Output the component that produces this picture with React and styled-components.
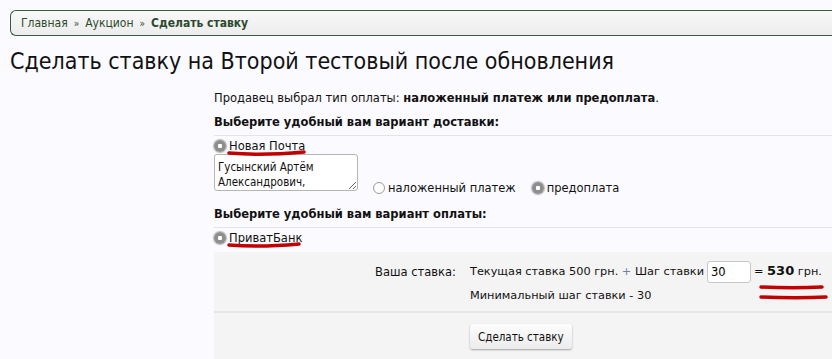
import React from 'react';
import styled, { createGlobalStyle } from 'styled-components';

const GlobalStyle = createGlobalStyle`
  body {
    margin: 0;
    background: #fbfaff;
    font-family: "DejaVu Sans", Verdana, sans-serif;
    font-size: 11.5px;
    color: #111;
  }
`;

const condensed = `"DejaVu Sans Condensed", "DejaVu Sans", Tahoma, sans-serif`;

const Page = styled.div`
  width: 832px;
  height: 359px;
  overflow: hidden;
`;

const Breadcrumbs = styled.div`
  margin: 10px 0 0 10px;
  height: 24px;
  border: 1px solid #3b5a3e;
  border-right: none;
  border-radius: 6px 0 0 6px;
  background: linear-gradient(#f8f8f8, #ececec);
  padding-left: 10px;
  display: flex;
  align-items: center;
  gap: 6px;
  color: #2b4a2d;
  font-family: ${condensed};
  font-size: 12px;
`;

const Crumb = styled.span`
  font-weight: ${p => (p.$current ? 'bold' : 'normal')};
`;

const Sep = styled.span`
  font-size: 10px;
`;

const Title = styled.h1`
  margin: 10px 0 0 10px;
  font-family: ${condensed};
  font-size: 23px;
  font-weight: normal;
  color: #111;
  line-height: 30px;
`;

const Content = styled.div`
  margin: 14px 0 0 214px;
`;

const Line = styled.p`
  margin: 0;
  line-height: 16px;
`;

const Heading = styled.div`
  margin-top: ${p => p.$top || 0}px;
  font-weight: bold;
  padding-bottom: 5px;
  border-bottom: 1px solid #e4e4e8;
  line-height: 16px;
`;

const Option = styled.label`
  position: relative;
  display: inline-flex;
  align-items: center;
  gap: 3px;
  line-height: 14px;
  white-space: nowrap;
`;

const Radio = styled.span`
  width: 12px;
  height: 12px;
  border-radius: 50%;
  box-sizing: border-box;
  flex: none;
  ${p =>
    p.$checked
      ? `
    background: radial-gradient(circle, #fff 0 2px, #8e8e8e 2.5px);
    box-shadow: 0 0 1px 1px #b8b8b8;
  `
      : `
    background: #fff;
    border: 1px solid #9a9a9a;
  `}
`;

const Scribble = styled.svg`
  position: absolute;
  pointer-events: none;
`;

const DeliveryBlock = styled.div`
  margin-top: 3px;
`;

const DeliveryRow = styled.div`
  display: flex;
  align-items: flex-end;
  gap: 15px;
`;

const Address = styled.textarea`
  display: block;
  width: 144px;
  height: 37px;
  box-sizing: border-box;
  margin: -1px 0 0;
  padding: 5px 3px 0;
  border: 1px solid #b5b5b5;
  border-radius: 3px;
  font-family: ${condensed};
  font-size: 11.5px;
  line-height: 15px;
  color: #111;
  resize: both;
  overflow: hidden;
  background: #fff;
`;

const PayTypes = styled.div`
  display: flex;
  gap: 16px;
  margin-bottom: -4px;
`;

const PaymentBlock = styled.div`
  margin-top: 3px;
`;

const BidPanel = styled.div`
  margin-top: 5px;
  background: #f4f4f4;
`;

const BidGrid = styled.div`
  display: grid;
  grid-template-columns: 242px 1fr;
  column-gap: 14px;
  row-gap: 2px;
  padding: 8px 0 4px;
  border-bottom: 2px solid #e6e6e6;
  align-items: center;
  white-space: nowrap;
`;

const Label = styled.div`
  text-align: right;
  line-height: 22px;
`;

const Value = styled.div`
  line-height: 22px;
  font-size: 11.3px;
`;

const Plus = styled.span`
  color: #6f7fa0;
`;

const StepInput = styled.input`
  width: 44px;
  height: 22px;
  box-sizing: border-box;
  margin: 0 3px;
  vertical-align: middle;
  border: 1px solid #c8c8c8;
  border-radius: 3px;
  padding: 0 3px;
  font-family: "DejaVu Sans", Verdana, sans-serif;
  font-size: 11.5px;
  background: #fff;
`;

const Sum = styled.span`
  position: relative;
`;

const Total = styled.b`
  font-size: 13px;
`;

const Actions = styled.div`
  padding: 11px 0 20px 256px;
`;

const Button = styled.button`
  height: 25px;
  padding: 0 8px;
  border: none;
  border-radius: 3px;
  background: linear-gradient(#fdfdfd, #ececec);
  box-shadow: 0 1px 2px rgba(0, 0, 0, 0.35);
  font-family: ${condensed};
  font-size: 11.5px;
  color: #111;
`;

const RedLine = ({ style, w, h = 8, d }) => (
  <Scribble style={style} width={w} height={h} viewBox={`0 0 ${w} ${h}`}>
    <path d={d} fill="none" stroke="#c20000" strokeWidth="3.5" strokeLinecap="round" />
  </Scribble>
);

export default function App() {
  return (
    <Page>
      <GlobalStyle />
      <Breadcrumbs>
        <Crumb>Главная</Crumb>
        <Sep>»</Sep>
        <Crumb>Аукцион</Crumb>
        <Sep>»</Sep>
        <Crumb $current>Сделать ставку</Crumb>
      </Breadcrumbs>
      <Title>Сделать ставку на Второй тестовый после обновления</Title>
      <Content>
        <Line>
          Продавец выбрал тип оплаты: <b>наложенный платеж или предоплата</b>.
        </Line>
        <Heading $top={8}>Выберите удобный вам вариант доставки:</Heading>
        <DeliveryBlock>
          <Option>
            <Radio $checked />
            Новая Почта
            <RedLine
              style={{ left: 13, top: 10 }}
              w={80}
              d="M2 4 C 25 6, 55 5, 77 3"
            />
          </Option>
          <DeliveryRow>
            <Address defaultValue={'Гусынский Артём\nАлександрович,\nг. Киев'} />
            <PayTypes>
              <Option>
                <Radio />
                наложенный платеж
              </Option>
              <Option>
                <Radio $checked />
                предоплата
              </Option>
            </PayTypes>
          </DeliveryRow>
        </DeliveryBlock>
        <Heading $top={15}>Выберите удобный вам вариант оплаты:</Heading>
        <PaymentBlock>
          <Option>
            <Radio $checked />
            ПриватБанк
            <RedLine
              style={{ left: 13, top: 10 }}
              w={76}
              d="M2 4 C 25 6, 50 5, 72 3"
            />
          </Option>
        </PaymentBlock>
        <BidPanel>
          <BidGrid>
            <Label>Ваша ставка:</Label>
            <Value>
              Текущая ставка 500 грн. <Plus>+</Plus> Шаг ставки
              <StepInput defaultValue="30" />
              <Sum>
                = <Total>530</Total> грн.
                <RedLine
                  style={{ left: 4, top: 18 }}
                  w={72}
                  h={20}
                  d="M3 4 C 25 5, 45 5, 64 4 M3 14 C 25 15, 50 15, 68 14"
                />
              </Sum>
            </Value>
            <span />
            <Value>Минимальный шаг ставки - 30</Value>
          </BidGrid>
          <Actions>
            <Button>Сделать ставку</Button>
          </Actions>
        </BidPanel>
      </Content>
    </Page>
  );
}
